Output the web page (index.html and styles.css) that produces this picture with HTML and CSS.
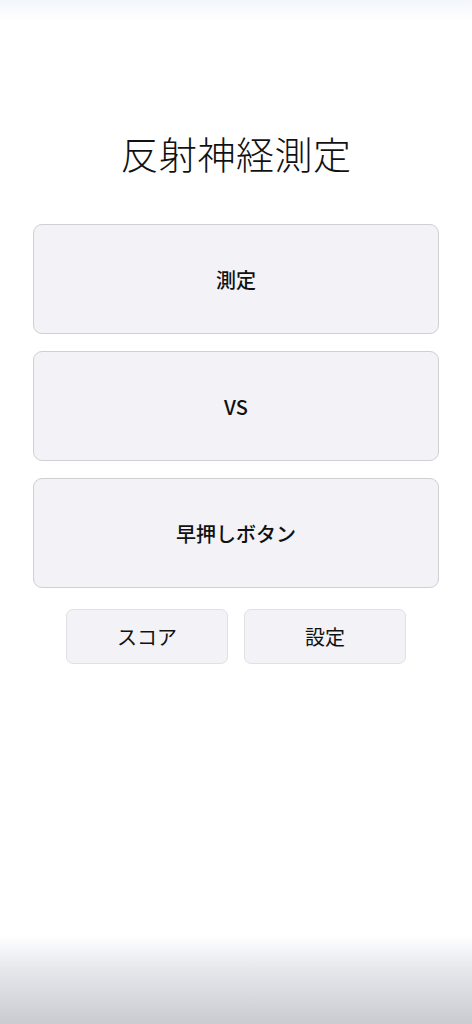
FILE: index.html
```html
<!DOCTYPE html>
<html lang="ja">
<head>
    <meta charset="UTF-8">
    <meta name="viewport" content="width=device-width, initial-scale=1.0">
    <title>反射神経測定</title>
    <link rel="stylesheet" href="styles.css">
</head>
<body>
    <div class="screen">
        <h1 class="title">反射神経測定</h1>

        <div class="menu">
            <button class="menu-btn">測定</button>
            <button class="menu-btn">VS</button>
            <button class="menu-btn">早押しボタン</button>
        </div>

        <div class="sub-menu">
            <button class="sub-btn">スコア</button>
            <button class="sub-btn">設定</button>
        </div>
    </div>
</body>
</html>
```

FILE: styles.css
```css
html, body{
     margin: 0;
     height: 100%;
}
body{
     font-family: "Noto Sans CJK JP", "Noto Sans", sans-serif;
     color: #111;
     background: linear-gradient(to bottom, #f3f6fb 0px, #ffffff 22px, #ffffff 935px, #e6e8ec 968px, #c9cbd1 1024px);
}
.screen{
     display: flex;
     flex-direction: column;
     align-items: center;
     padding-top: 131px;
}
.title{
     margin: 0 0 49px;
     font-size: 38px;
     font-weight: 300;
     line-height: 44px;
     letter-spacing: 0.5px;
}
.menu{
     width: 406px;
     display: flex;
     flex-direction: column;
     gap: 17px;
}
.menu-btn{
     height: 110px;
     background-color: #f2f2f7;
     border: 1.5px solid #cfcfd4;
     border-radius: 9px;
     font-family: inherit;
     font-size: 20px;
     font-weight: 500;
     color: #111;
}
.sub-menu{
     margin-top: 21px;
     display: flex;
     gap: 16px;
}
.sub-btn{
     width: 162px;
     height: 55px;
     background-color: #f2f2f7;
     border: 1px solid #e0e0e5;
     border-radius: 7px;
     font-family: inherit;
     font-size: 20px;
     color: #111;
}
```
